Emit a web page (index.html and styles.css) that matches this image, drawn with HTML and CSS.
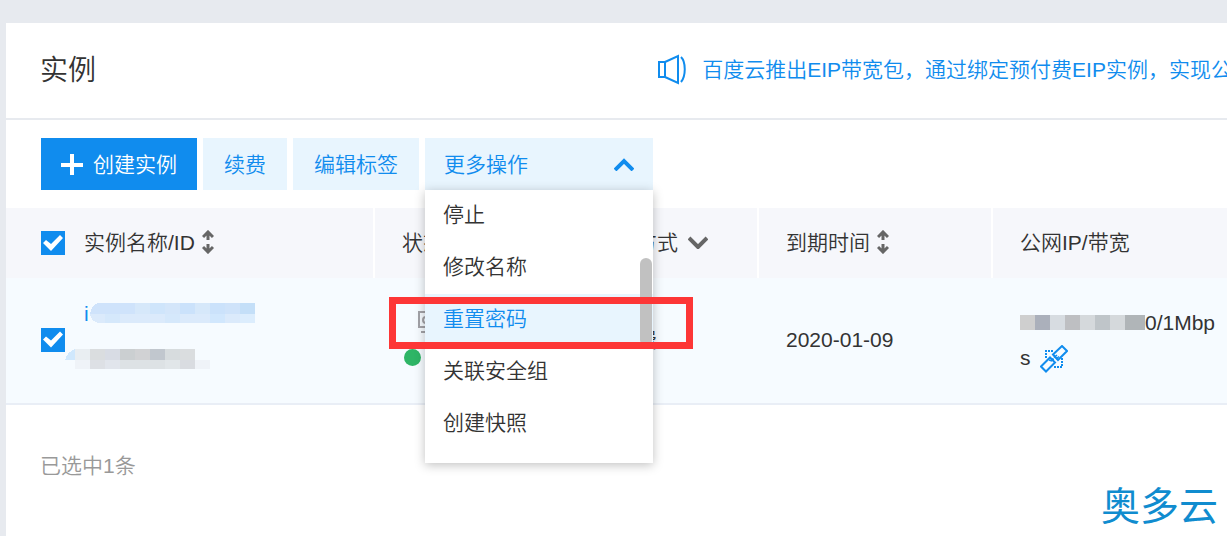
FILE: index.html
```html
<!DOCTYPE html>
<html lang="zh-CN">
<head>
    <meta charset="UTF-8">
    <meta name="viewport" content="width=device-width, initial-scale=1.0">
    <title>实例</title>
    <link rel="stylesheet" href="styles.css">
</head>
<body>
    <div class="panel">
        <div class="panel-header">
            <h1>实例</h1>
            <a class="notice" href="#">
                <svg class="notice-icon" width="30" height="32" viewBox="0 0 30 32" fill="none" stroke="currentColor" stroke-width="2">
                    <path d="M2 8h6v15H2zM8 8l13-6v27L8 23"/>
                    <path d="M24 3c5 5 5 19 0 25"/>
                </svg>
                <span>百度云推出EIP带宽包，通过绑定预付费EIP实例，实现公</span>
            </a>
        </div>

        <div class="toolbar">
            <button class="button primary" type="button">
                <svg width="22" height="22" viewBox="0 0 22 22" fill="none" stroke="currentColor" stroke-width="4">
                    <path d="M11 1v21M0 12h22"/>
                </svg>
                创建实例
            </button>
            <button class="button" type="button">续费</button>
            <button class="button" type="button">编辑标签</button>
            <div class="dropdown">
                <button class="button dropdown-toggle" type="button" aria-expanded="true">
                    更多操作
                    <svg width="20" height="14" viewBox="0 0 20 14" fill="none" stroke="currentColor" stroke-width="4">
                        <path d="M1 13l9-9 9 9"/>
                    </svg>
                </button>
                <div class="menu">
                    <button class="menu-item" type="button">停止</button>
                    <button class="menu-item" type="button">修改名称</button>
                    <button class="menu-item active" type="button">重置密码</button>
                    <button class="menu-item" type="button">关联安全组</button>
                    <button class="menu-item" type="button">创建快照</button>
                    <span class="scroll-thumb"></span>
                    <span class="highlight"></span>
                </div>
            </div>
        </div>

        <table class="instances">
            <colgroup>
                <col class="col-check">
                <col class="col-name">
                <col class="col-status">
                <col class="col-pay">
                <col class="col-expire">
                <col>
            </colgroup>
            <thead>
                <tr>
                    <th class="check-cell"><input type="checkbox" aria-label="全选" checked></th>
                    <th class="name-cell">
                        <span class="th-label">实例名称/ID
                            <svg class="sort" width="12" height="24" viewBox="0 0 12 24" fill="none" stroke="currentColor" stroke-width="3">
                                <path d="M1 7l5-5 5 5M6 2v8M1 17l5 5 5-5M6 22v-8"/>
                            </svg>
                        </span>
                    </th>
                    <th>状态</th>
                    <th>
                        <span class="th-label">支付方式
                            <svg class="filter" width="20" height="14" viewBox="0 0 20 14" fill="none" stroke="currentColor" stroke-width="4">
                                <path d="M1 3l9 9 9-9"/>
                            </svg>
                        </span>
                    </th>
                    <th>
                        <span class="th-label">到期时间
                            <svg class="sort" width="12" height="24" viewBox="0 0 12 24" fill="none" stroke="currentColor" stroke-width="3">
                                <path d="M1 7l5-5 5 5M6 2v8M1 17l5 5 5-5M6 22v-8"/>
                            </svg>
                        </span>
                    </th>
                    <th>公网IP/带宽</th>
                </tr>
            </thead>
            <tbody>
                <tr>
                    <td class="check-cell"><input type="checkbox" aria-label="选择实例" checked></td>
                    <td>
                        <div class="name-stack">
                            <a class="instance-name" href="#">i<svg width="165" height="20" viewBox="0 0 165 20" shape-rendering="crispEdges">
                                <path fill="#cfe3fb" d="M8 0h37v11H0Q1 3 8 0z"/>
                                <path fill="#d6e8fa" d="M45 0h15v11H45zM105 0h15v11h-15z"/>
                                <path fill="#cfe5fb" d="M60 0h15v11H60z"/>
                                <path fill="#d4e6fa" d="M75 0h15v11H75z"/>
                                <path fill="#cbe2fb" d="M90 0h15v11H90zM120 0h15v11h-15z"/>
                                <path fill="#cfe3fa" d="M135 0h15v11h-15z"/>
                                <path fill="#c4dff8" d="M150 0h15v11h-15z"/>
                                <path fill="#dbeafb" d="M0 11h165v9H8Q1 18 0 11z"/>
                                <path fill="#d5e8fb" d="M15 11h15v9H15zM75 11h15v9H75z"/>
                                <path fill="#d1e7fd" d="M120 11h15v9h-15z"/>
                                <path fill="#dcedfd" d="M150 11h15v9h-15z"/>
                            </svg></a>
                            <svg class="instance-id" width="145" height="20" viewBox="0 0 145 20" shape-rendering="crispEdges">
                                <path fill="#d0e8fd" d="M10 0v11H0Q2 3 10 0z"/>
                                <path fill="#e9eef2" d="M10 0h15v11H10z"/>
                                <path fill="#dadddf" d="M25 0h15v11H25zM115 0h15v11h-15z"/>
                                <path fill="#d8dce4" d="M40 0h15v11H40z"/>
                                <path fill="#cbcfd1" d="M55 0h15v11H55z"/>
                                <path fill="#d1d2d4" d="M70 0h15v11H70z"/>
                                <path fill="#c1c7ce" d="M85 0h15v11H85z"/>
                                <path fill="#d7dcde" d="M100 0h15v11h-15z"/>
                                <path fill="#eff3f8" d="M10 11h15v9H10zM130 11h15v9h-15z"/>
                                <path fill="#dde0e5" d="M25 11h15v9H25z"/>
                                <path fill="#e1e5ec" d="M40 11h15v9H40z"/>
                                <path fill="#dde2e5" d="M55 11h45v9H55z"/>
                                <path fill="#e1e6e9" d="M100 11h15v9h-15z"/>
                                <path fill="#d9dce1" d="M115 11h15v9h-15z"/>
                            </svg>
                        </div>
                    </td>
                    <td>
                        <div class="status">
                            <svg class="monitor" width="26" height="22" viewBox="0 0 26 22" fill="none" stroke="#a3a3a8" stroke-width="2">
                                <path d="M1 1h24v15H1zM3 21h18"/>
                                <circle cx="8" cy="9" r="3"/>
                            </svg>
                            <span class="dot"></span>
                        </div>
                    </td>
                    <td>预付费</td>
                    <td>2020-01-09</td>
                    <td class="ip-cell">
                        <svg class="ip-mask" width="125" height="15" viewBox="0 0 125 15" shape-rendering="crispEdges">
                            <path fill="#cfcfcf" d="M0 0h15v15H0z"/>
                            <path fill="#abb0bb" d="M15 0h15v15H15z"/>
                            <path fill="#d7dce1" d="M30 0h15v15H30z"/>
                            <path fill="#bebfc2" d="M45 0h15v15H45z"/>
                            <path fill="#d5d9dc" d="M60 0h15v15H60zM90 0h15v15H90z"/>
                            <path fill="#bfc5c9" d="M75 0h15v15H75z"/>
                            <path fill="#b0b5b8" d="M105 0h20v15h-20z"/>
                        </svg>0/1Mbps
                        <svg class="bind-icon" width="28" height="28" viewBox="0 0 28 28" fill="none" stroke="#108cee" stroke-width="2">
                            <path stroke-dasharray="2 1" d="M5 6h8M6 8v6M14 22h9M22 21v-8"/>
                            <path d="M1 21.500L10 12.500l5 5L6 26.500zM13 9.500L22 1l5 5-9 9z"/>
                            <path stroke-width="1.500" d="M9 15l3 1M11 13.500l3 1M14 12.500l3-2.500M16 14l3-2.500"/>
                        </svg>
                    </td>
                </tr>
            </tbody>
        </table>

        <p class="summary">已选中1条</p>
    </div>
    <div class="watermark">奥多云</div>
</body>
</html>
```
FILE: styles.css
```css
* {
    box-sizing: border-box;
}

body {
    margin: 0;
    padding: 23px 0 0 6px;
    min-height: 100vh;
    display: flex;
    flex-direction: column;
    background-color: #e7eaef;
    color: #333;
    font-family: "Liberation Sans", "Noto Sans CJK SC", sans-serif;
    font-size: 21px;
    font-weight: 350;
    line-height: 35px;
    overflow-x: hidden;
}

.panel {
    flex: 1;
    background-color: #fff;
}

.panel-header {
    display: flex;
    align-items: center;
    padding: 0 0 0 34px;
    height: 97px;
    border-bottom: 2px solid #e7eaef;
    overflow: hidden;
}

h1 {
    flex: 1 0 auto;
    margin: 0;
    font-size: 28px;
    font-weight: 350;
}

.notice {
    display: flex;
    align-items: center;
    gap: 15px;
    width: 48%;
    padding-bottom: 2px;
    color: #108cee;
    text-decoration: none;
    white-space: nowrap;
}

.notice svg {
    flex: none;
}

.toolbar {
    display: flex;
    gap: 6px;
    padding: 18px 35px;
}

.button {
    display: flex;
    align-items: center;
    gap: 10px;
    height: 52px;
    padding: 0 21px;
    border: none;
    background-color: #e8f5fe;
    color: #108cee;
    font: inherit;
    cursor: pointer;
}

.button.primary {
    padding: 0 20px;
    background-color: #108cee;
    color: #fff;
}

.dropdown {
    position: relative;
    width: 228px;
}

.dropdown-toggle {
    width: 100%;
    justify-content: space-between;
    padding: 0 19px;
}

.menu {
    position: absolute;
    top: 100%;
    left: 0;
    z-index: 2;
    width: 100%;
    padding-bottom: 13px;
    background-color: #fff;
    box-shadow: 0 2px 10px rgba(0, 0, 0, 0.25);
}

.menu-item {
    display: block;
    width: 100%;
    height: 52px;
    padding: 0 18px 4px;
    border: none;
    background-color: #fff;
    color: #333;
    font: inherit;
    text-align: left;
    cursor: pointer;
}

.menu-item.active {
    background-color: #e8f5fe;
    color: #108cee;
}

.scroll-thumb {
    position: absolute;
    top: 68px;
    right: 1px;
    width: 12px;
    height: 88px;
    border-radius: 6px;
    background-color: #c1c1c1;
}

.highlight {
    position: absolute;
    top: 107px;
    left: -36px;
    width: 304px;
    height: 52px;
    border: 7px solid #fd3636;
    pointer-events: none;
}

.instances {
    width: 100%;
    table-layout: fixed;
    border-collapse: separate;
    border-spacing: 0;
}

.col-check {
    width: 59px;
}

.col-name {
    width: 310px;
}

.col-status {
    width: 192px;
}

.col-pay {
    width: 192px;
}

.col-expire {
    width: 234px;
}

.instances th {
    height: 70px;
    padding: 0 0 2px 27px;
    border-right: 2px solid #fff;
    background-color: #f6f7fb;
    font-weight: 350;
    text-align: left;
    white-space: nowrap;
}

.instances td {
    height: 127px;
    padding: 0 0 2px 27px;
    border-bottom: 2px solid #e9eef6;
    background-color: #f6fbff;
}

.instances th:last-child {
    border-right: none;
}

.instances .check-cell {
    padding-left: 35px;
    border-right: none;
}

.instances th.check-cell {
    padding-bottom: 0;
}

.instances .name-cell {
    padding-left: 19px;
}

.instances td:nth-child(2) {
    padding-left: 0;
}

.instances td.ip-cell {
    padding-right: 8px;
    word-break: break-all;
}

.th-label {
    display: flex;
    align-items: center;
    gap: 7px;
}

.sort,
.filter {
    color: #666;
}

.filter {
    margin-left: 3px;
}

input[type="checkbox"] {
    appearance: none;
    display: block;
    width: 24px;
    height: 24px;
    margin: 0;
    background-color: #108cee;
}

input[type="checkbox"]::before {
    content: "";
    display: block;
    width: 24px;
    height: 24px;
    background-color: #fff;
    clip-path: polygon(2px 12px, 5px 9px, 10px 13px, 19px 4px, 22px 7px, 10px 20px);
}

.name-stack {
    display: flex;
    flex-direction: column;
    gap: 18px;
    padding-bottom: 15px;
}

.instance-name {
    display: flex;
    align-items: center;
    gap: 1px;
    height: 35px;
    padding-left: 19px;
    color: #108cee;
    text-decoration: none;
}

.status {
    display: flex;
    flex-direction: column;
    gap: 16px;
    padding: 0 0 2px 2px;
}

.monitor {
    margin-left: 14px;
}

.dot {
    width: 17px;
    height: 17px;
    border-radius: 50%;
    background-color: #2eb566;
}

.ip-mask {
    vertical-align: baseline;
}

.bind-icon {
    margin-left: 4px;
    vertical-align: middle;
}

.summary {
    margin: 0;
    padding: 43px 34px;
    color: #999;
}

.watermark {
    position: absolute;
    right: 9px;
    bottom: 9px;
    color: #108ccf;
    font-size: 39px;
    font-weight: 400;
    line-height: 40px;
}
```
